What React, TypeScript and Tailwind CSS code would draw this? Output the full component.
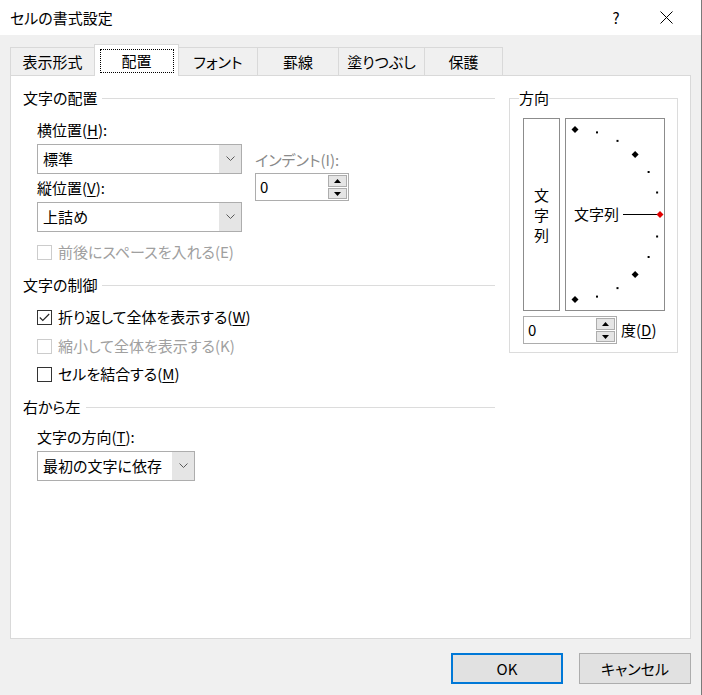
import React from 'react';

const tabs = ['表示形式', '配置', 'フォント', '罫線', '塗りつぶし', '保護'];
const tabWidths = ['w-[84px]', 'w-[85px]', 'w-[78px]', 'w-[81px]', 'w-[86px]', 'w-[79px]'];

const Chevron = () => (
  <svg width="9" height="6" viewBox="0 0 9 6">
    <polyline points="0.5,0.5 4.5,4.5 8.5,0.5" fill="none" stroke="#5a5a5a" strokeWidth="1" />
  </svg>
);

const Combo = ({ value, width }: { value: string; width: string }) => (
  <div className={`flex h-[30px] ${width} border border-[#adadad] bg-white`}>
    <div className="flex flex-1 items-center pl-[5px]">{value}</div>
    <div className="flex w-[22px] items-center justify-center bg-[#e5e5e5]">
      <Chevron />
    </div>
  </div>
);

const Spin = ({ width }: { width: string }) => (
  <div className={`flex h-[28px] ${width} border border-[#adadad] bg-white`}>
    <div className="flex flex-1 items-center pl-[4px]">0</div>
    <div className="flex flex-col gap-px py-px pr-px">
      <div className="flex h-[12px] w-[19px] items-center justify-center border border-[#adadad] bg-[#e5e5e5]">
        <svg width="7" height="4" viewBox="0 0 7 4"><polygon points="3.5,0 7,4 0,4" fill="#000" /></svg>
      </div>
      <div className="flex h-[11px] w-[19px] items-center justify-center border border-[#adadad] bg-[#e5e5e5]">
        <svg width="7" height="4" viewBox="0 0 7 4"><polygon points="0,0 7,0 3.5,4" fill="#000" /></svg>
      </div>
    </div>
  </div>
);

const GroupLabel = ({ text, className = '' }: { text: string; className?: string }) => (
  <div className={`flex h-[20px] items-center ${className}`}>
    <span>{text}</span>
    <div className="ml-[5px] h-px flex-1 bg-[#dcdcdc]" />
  </div>
);

const Check = ({ label, checked, disabled, className = '' }: { label: React.ReactNode; checked?: boolean; disabled?: boolean; className?: string }) => (
  <div className={`flex h-[20px] items-center ${disabled ? 'text-[#a0a0a0]' : ''} ${className}`}>
    <div className={`flex h-[15px] w-[15px] items-center justify-center border bg-white ${disabled ? 'border-[#cccccc]' : 'border-[#333333]'}`}>
      {checked && (
        <svg width="11" height="9" viewBox="0 0 11 9">
          <polyline points="0.8,4.5 3.8,7.5 10.2,1" fill="none" stroke="#222" strokeWidth="1.1" />
        </svg>
      )}
    </div>
    <span className="ml-[6px]">{label}</span>
  </div>
);

const U = ({ c }: { c: string }) => <span className="underline underline-offset-2">{c}</span>;

const Dial = () => {
  const angles = [90, 75, 60, 45, 30, 15, 0, -15, -30, -45, -60, -75, -90];
  return (
    <div className="relative h-[193px] w-[100px] border border-[#8c8c8c] bg-white">
      <svg className="absolute inset-0" width="98" height="191" viewBox="0 0 98 191">
        <line x1="57" y1="95.5" x2="91" y2="95.5" stroke="#000" strokeWidth="1" />
        {angles.map((a) => {
          const r = (a * Math.PI) / 180;
          const x = 9 + 85 * Math.cos(r);
          const y = 95.5 - 85 * Math.sin(r);
          if (a % 45 === 0) {
            const s = 3.5;
            return (
              <polygon
                key={a}
                points={`${x},${y - s} ${x + s},${y} ${x},${y + s} ${x - s},${y}`}
                fill={a === 0 ? '#e00000' : '#000'}
              />
            );
          }
          return <rect key={a} x={x - 1} y={y - 1} width="2" height="2" fill="#000" />;
        })}
      </svg>
      <span className="absolute left-[8px] top-[85px] leading-[20px]">文字列</span>
    </div>
  );
};

export default function App() {
  return (
    <div className="flex h-[695px] w-[702px] flex-col border-r border-[#7a7a7a] bg-[#f0f0f0] font-['Noto_Sans_CJK_JP','Noto_Sans',sans-serif] text-[15px] leading-[20px] text-black [font-feature-settings:'palt']">
      {/* title bar */}
      <div className="flex h-[35px] shrink-0 items-center justify-between bg-white pl-[10px] pr-[10px]">
        <span>セルの書式設定</span>
        <div className="flex">
          <div className="flex w-[50px] items-center justify-center text-[15px]">?</div>
          <div className="flex w-[50px] items-center justify-center">
            <svg width="13" height="13" viewBox="0 0 13 13">
              <path d="M0.5 0.5 L12.5 12.5 M12.5 0.5 L0.5 12.5" stroke="#000" strokeWidth="1" />
            </svg>
          </div>
        </div>
      </div>

      {/* tabs */}
      <div className="mt-[9px] flex h-[31px] items-end px-[10px]">
        {tabs.map((t, i) => {
          const active = i === 1;
          return (
            <div
              key={t}
              className={`${tabWidths[i]} flex items-center justify-center border-t border-[#d9d9d9] ${
                active
                  ? 'relative z-10 -mb-px h-[32px] border-x bg-white'
                  : `h-[28px] bg-[#f0f0f0] ${i === 0 ? 'border-l' : ''} ${i === 2 ? '' : i > 2 ? 'border-l' : ''} ${i === 5 ? 'border-r' : ''}`
              }`}
            >
              {active ? (
                <div className="flex h-[24px] w-[74px] items-center justify-center border border-dotted border-black">{t}</div>
              ) : (
                t
              )}
            </div>
          );
        })}
      </div>

      {/* panel */}
      <div className="mx-[10px] flex h-[564px] shrink-0 gap-[14px] border border-[#d9d9d9] bg-white px-[12px] pt-[12px]">
        <div className="flex w-[472px] flex-col">
          <GroupLabel text="文字の配置" />
          <div className="flex gap-[13px] pl-[14px]">
            <div className="flex flex-col">
              <div className="mt-[12px] h-[20px]">横位置(<U c="H" />):</div>
              <div className="mt-[4px]"><Combo value="標準" width="w-[205px]" /></div>
              <div className="mt-[4px] h-[20px]">縦位置(<U c="V" />):</div>
              <div className="mt-[4px]"><Combo value="上詰め" width="w-[205px]" /></div>
            </div>
            <div className="mt-[42px] flex flex-col">
              <div className="h-[20px] text-[#8a8a8a]">インデント(I):</div>
              <div className="mt-[3px]"><Spin width="w-[94px]" /></div>
            </div>
          </div>
          <Check className="ml-[14px] mt-[10px]" disabled label="前後にスペースを入れる(E)" />

          <GroupLabel text="文字の制御" className="mt-[13px]" />
          <Check className="ml-[14px] mt-[12px]" checked label={<>折り返して全体を表示する(<U c="W" />)</>} />
          <Check className="ml-[14px] mt-[9px]" disabled label="縮小して全体を表示する(K)" />
          <Check className="ml-[14px] mt-[8px]" label={<>セルを結合する(<U c="M" />)</>} />

          <GroupLabel text="右から左" className="mt-[13px]" />
          <div className="ml-[14px] mt-[10px] h-[20px]">文字の方向(<U c="T" />):</div>
          <div className="ml-[14px] mt-[4px]"><Combo value="最初の文字に依存" width="w-[158px]" /></div>
        </div>

        <fieldset className="h-[265px] w-[169px] border border-[#dcdcdc] pl-[9px]">
          <legend className="h-[20px] leading-[20px]">方向</legend>
          <div className="ml-[4px] mt-[10px] flex gap-[5px]">
            <div className="flex h-[193px] w-[37px] flex-col items-center justify-center border border-[#8c8c8c] bg-white">
              <span>文</span>
              <span>字</span>
              <span>列</span>
            </div>
            <Dial />
          </div>
          <div className="ml-[4px] mt-[5px] flex items-center">
            <Spin width="w-[94px]" />
            <span className="ml-[4px]">度(<U c="D" />)</span>
          </div>
        </fieldset>
      </div>

      {/* buttons */}
      <div className="mt-[14px] flex justify-end gap-[16px] pr-[10px]">
        <button className="flex h-[31px] w-[112px] items-center justify-center border-2 border-[#0078d7] bg-[#e1e1e1]">OK</button>
        <button className="flex h-[31px] w-[112px] items-center justify-center border border-[#adadad] bg-[#e1e1e1]">キャンセル</button>
      </div>
    </div>
  );
}
